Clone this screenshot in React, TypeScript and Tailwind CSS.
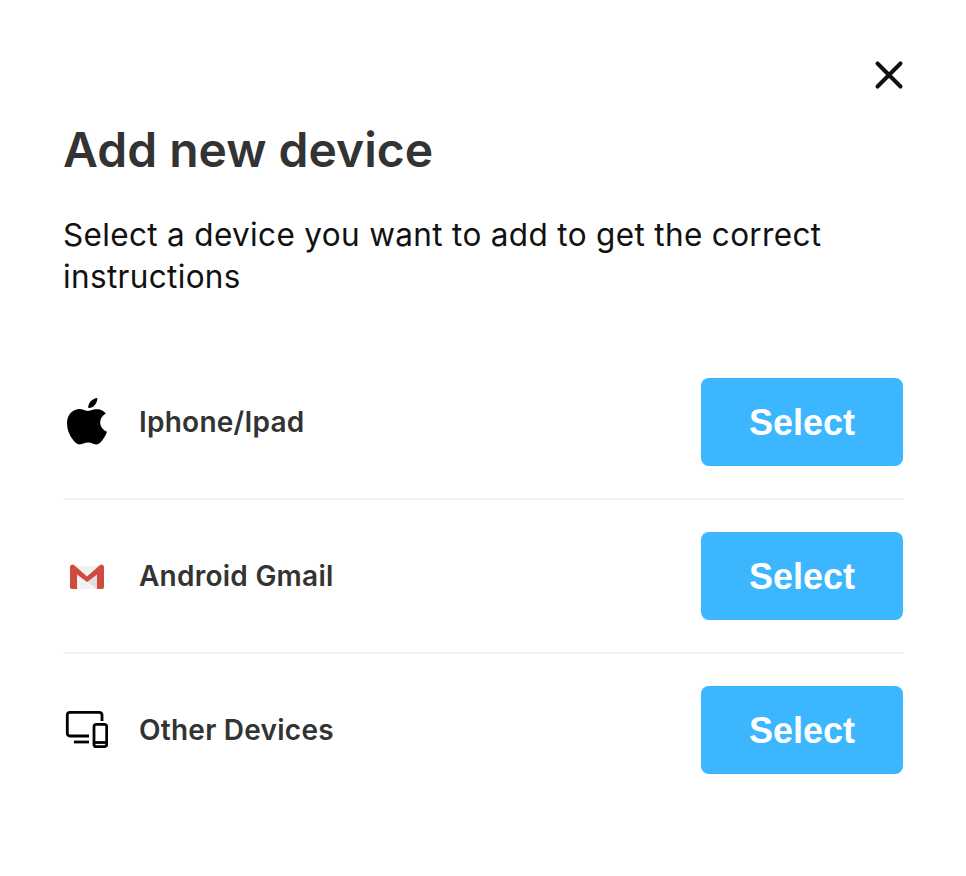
import { X } from "lucide-react";

function AppleIcon() {
  return (
    <svg viewBox="0 0 44 50" className="ml-[1px] h-[50px] w-[44px]" fill="#000">
      <path d="M32.300 1c.2 3-1 5.300-2.500 7-1.600 1.800-3.800 3.200-6.500 3-.3-2.700 1-5.200 2.500-6.800C27.500 2.400 30 1.200 32.300 1z" />
      <path d="M32 12c-3.300 0-6 1.900-9 1.900-3 0-5.300-1.800-8.600-1.800C8.800 12.100 2 16.800 2 26.300c0 5.700 2.100 11.200 5 15.300 2.300 3.300 4.700 5.900 7.700 5.900 3 0 4.600-1.900 8.300-1.900 3.800 0 4.900 1.900 8.300 1.900 3.100 0 5.300-3 7.100-5.700 1.600-2.400 2.900-5 3.500-7.100-4.200-1.700-6.700-5.300-6.700-9.400 0-3.900 2.200-6.800 5.600-8.800-2.300-3-5.800-4.500-9.100-4.500z" />
    </svg>
  );
}

function GmailIcon() {
  return (
    <svg viewBox="0 0 34 25" className="ml-[6px] h-[25px] w-[34px]">
      <path d="M5 2h24v23H5z" fill="#f1f1f1" />
      <path d="M7 25 27 10v15z" fill="#dedede" />
      <path d="M7 10 17 17.500 27 25H7z" fill="#f2f2f2" />
      <path d="M0 3C0 .8 2.500-.2 4 1L17 12.500 30 1c1.500-1.200 4-.2 4 2v20c0 1-.8 2-2 2h-5V10.500L17 18 7 10.500V25H2c-1.200 0-2-1-2-2z" fill="#d04a3f" />
    </svg>
  );
}

function DevicesIcon() {
  return (
    <svg viewBox="0 0 44 40" className="h-[40px] w-[44px]" fill="none" stroke="#000" strokeWidth="2.800">
      <path d="M25 26H6c-1.800 0-2.700-.9-2.700-2.700V5c0-1.800.9-2.700 2.700-2.700h29c2 0 3 .9 3 2.700v6" />
      <path d="M10 32h15" />
      <rect x="30" y="14.300" width="12.700" height="22.400" rx="2.500" />
      <path d="M30 32.500h12.700" />
    </svg>
  );
}

const devices = [
  { name: "Iphone/Ipad", icon: <AppleIcon /> },
  { name: "Android Gmail", icon: <GmailIcon /> },
  { name: "Other Devices", icon: <DevicesIcon /> },
];

export default function App() {
  return (
    <div className="flex h-[876px] w-[966px] flex-col bg-white pl-[63px] pr-[63px] pt-[52px] font-['Inter',sans-serif] text-[#333333]">
      <div className="flex justify-end">
        <button className="text-[#111111]">
          <X size={46} strokeWidth={2.1} className="-mr-[9px]" />
        </button>
      </div>
      <h1 className="mt-[24px] text-[48px] leading-[56px] font-semibold">Add new device</h1>
      <p className="mt-[36px] text-[31.5px] leading-[42px] tracking-[0.34px] text-[#111111]">
        Select a device you want to add to get the correct instructions
      </p>
      <div className="mt-[80px] flex flex-col">
        {devices.map((d, i) => (
          <div key={d.name} className={i < 2 ? "mb-[32px] border-b-2 border-[#f0f0f0] pb-[32px]" : ""}>
            <div className="flex h-[88px] items-center">
              <div className="flex w-[76px] justify-start pl-[1px]">{d.icon}</div>
              <span className="flex-1 text-[28px] font-semibold tracking-[0.25px]">{d.name}</span>
              <button className="h-[88px] w-[202px] rounded-[8px] bg-[#3bb6ff] pt-[1px] font-['Liberation_Sans',sans-serif] text-[36px] font-bold text-white">
                Select
              </button>
            </div>
          </div>
        ))}
      </div>
    </div>
  );
}
